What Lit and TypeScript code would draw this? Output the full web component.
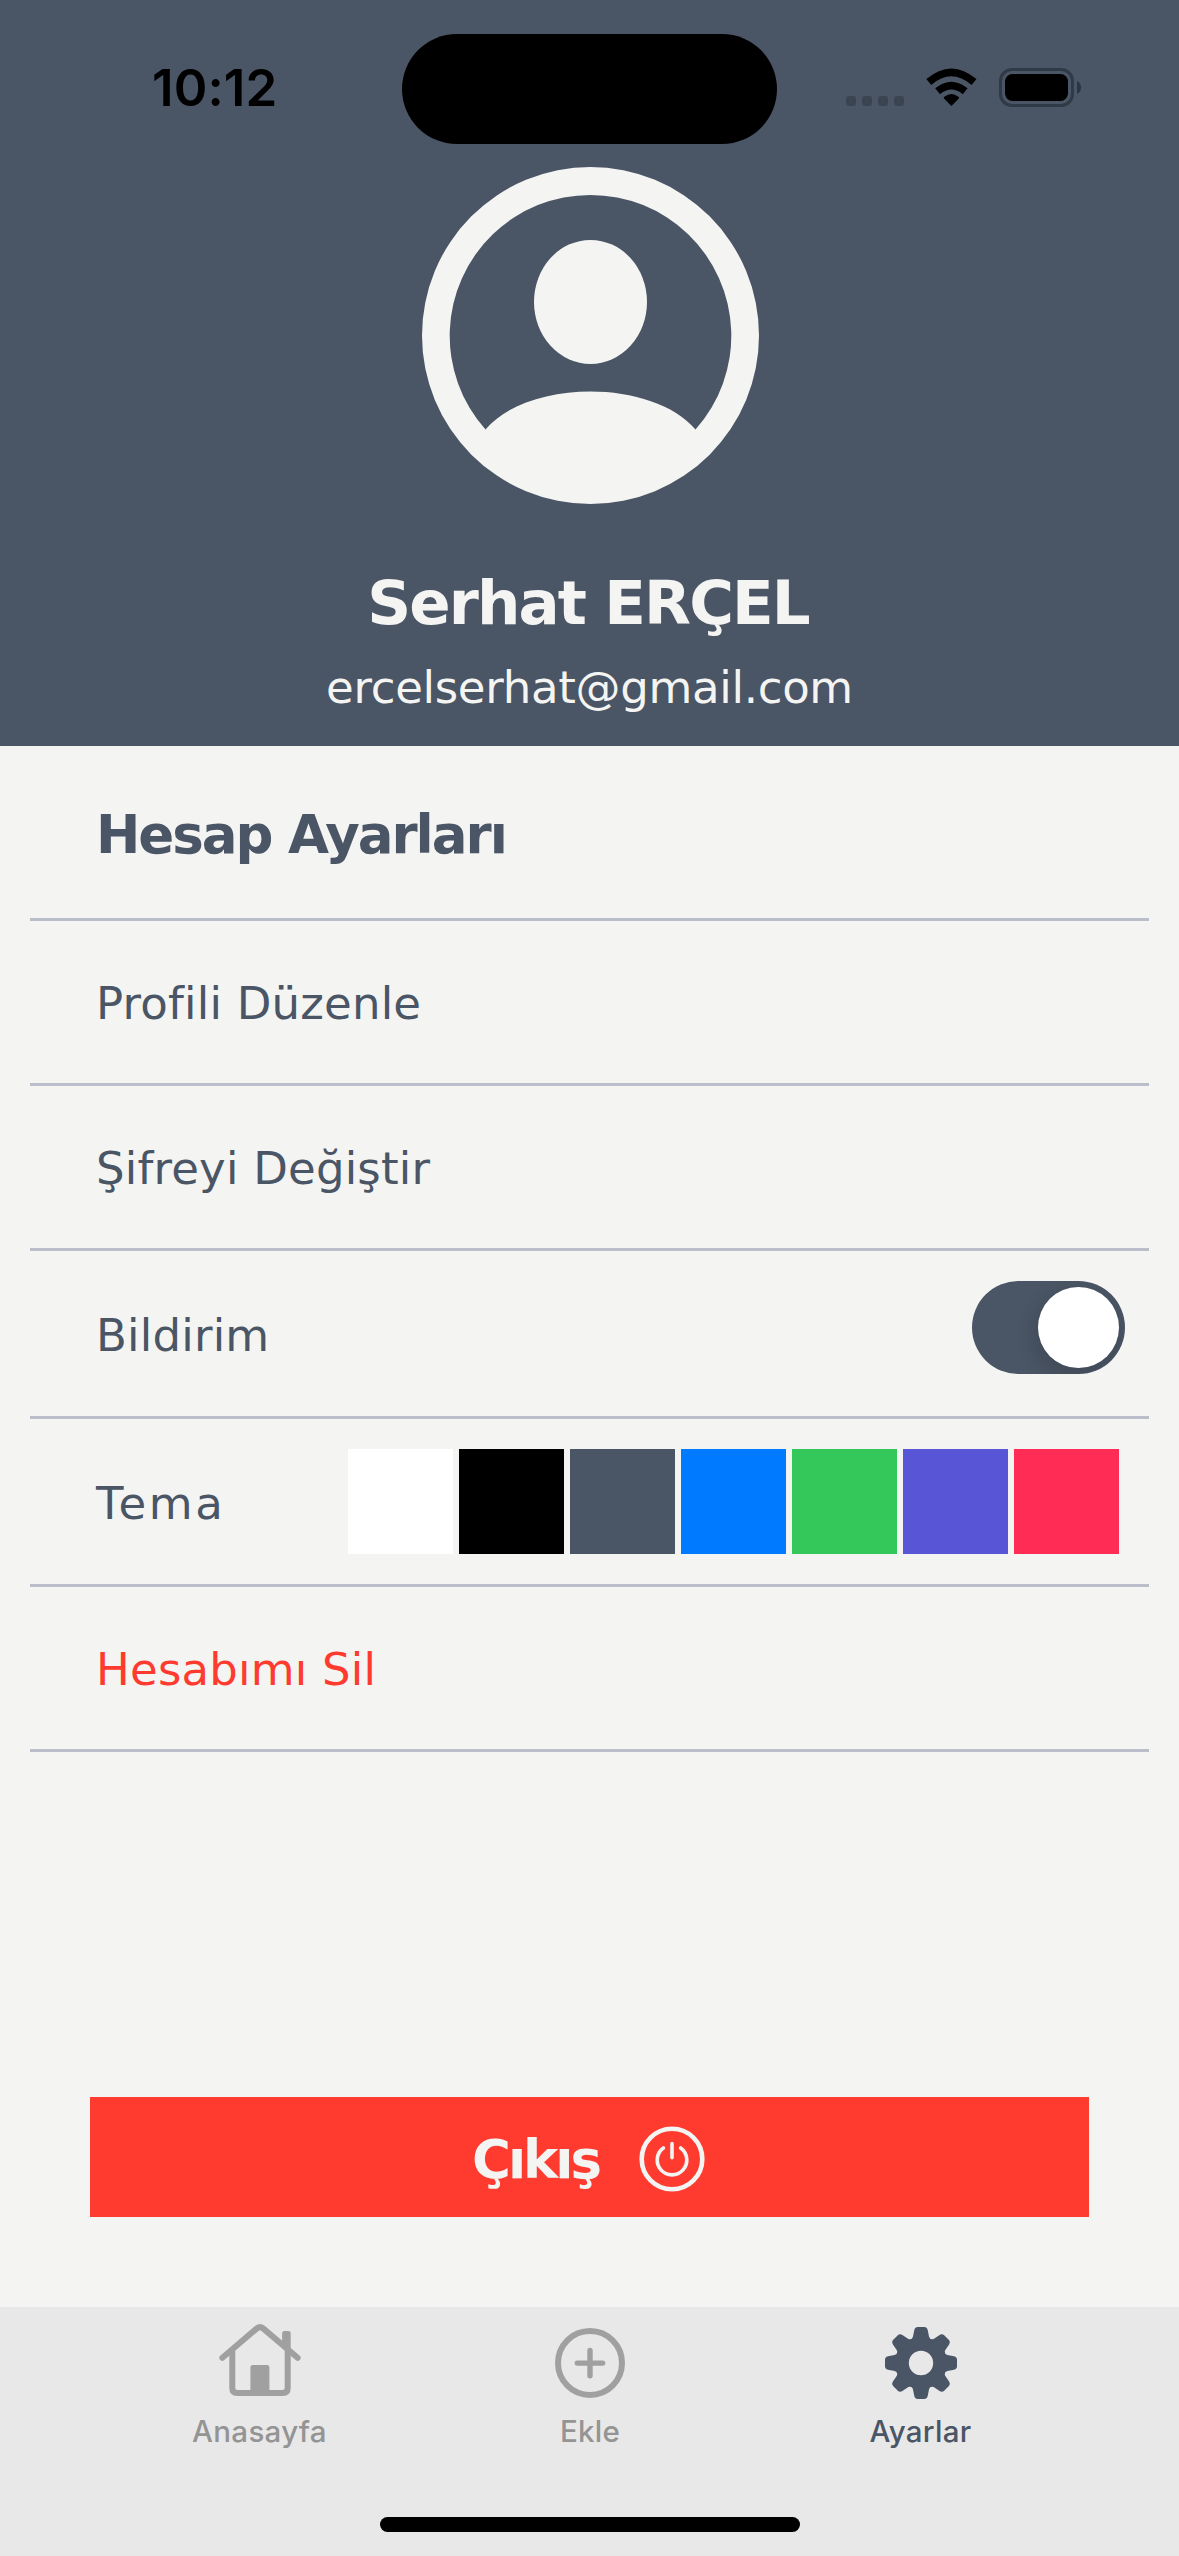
import { LitElement, html, css, svg } from "lit";
import { customElement, property } from "lit/decorators.js";

const THEMES = ["#ffffff", "#000000", "#4a5565", "#007aff", "#34c759", "#5856d6", "#ff2d55"];

@customElement("status-bar")
export class StatusBar extends LitElement {
  static styles = css`
    :host { display: block; height: 167px; }
    .bar { display: flex; align-items: flex-start; height: 100%; }
    .time {
      width: 402px; box-sizing: border-box; padding-left: 152px; padding-top: 57px;
      font: 600 51px/62px Inter, sans-serif; letter-spacing: 0.1px; color: #000;
    }
    .island { width: 375px; height: 110px; margin-top: 34px; border-radius: 55px; background: #000; }
    svg { display: block; margin-left: 67px; margin-top: 60px; }
  `;
  render() {
    return html`<div class="bar">
      <div class="time">10:12</div>
      <div class="island"></div>
      <svg width="250" height="56" viewBox="844 60 250 56">
        <g fill="#3b4552">
          <rect x="846" y="96" width="10" height="10" rx="3.4" />
          <rect x="862" y="96" width="10" height="10" rx="3.4" />
          <rect x="878" y="96" width="10" height="10" rx="3.4" />
          <rect x="894" y="96" width="10" height="10" rx="3.4" />
        </g>
        <path d="M951.4 106 L944 98.6 Q943.2 97.6 944.4 96.8 Q951.4 91.4 958.4 96.8 Q959.6 97.6 958.8 98.6 Z" />
        <g fill="none" stroke="#000" stroke-width="7.6">
          <path d="M937.6 91.2 Q951.4 80 965.2 91.2" />
          <path d="M928.8 82 Q951.4 62.8 974 82" />
        </g>
        <rect x="1000.5" y="69.5" width="72" height="36" rx="11.5" fill="none" stroke="#303a46" stroke-width="3" />
        <rect x="1005" y="74" width="63" height="27" rx="7.5" />
        <path d="M1077 81 Q1081 83 1081 87.5 Q1081 92 1077 94 Z" fill="#2b343f" />
      </svg>
    </div>`;
  }
}

@customElement("profile-card")
export class ProfileCard extends LitElement {
  @property() name = "";
  @property() email = "";
  static styles = css`
    :host { display: flex; flex-direction: column; align-items: center; height: 579px; color: #f4f4f2; }
    svg { display: block; margin-left: 2px; }
    .name {
      margin-top: 63px; padding-right: 3px; font: 700 61px/72px "DejaVu Sans", sans-serif; letter-spacing: -1.9px;
      white-space: nowrap;
    }
    .email { margin-top: 22px; font: 45px/54px "DejaVu Sans", sans-serif; letter-spacing: -0.3px; white-space: nowrap; }
  `;
  render() {
    return html`
      <svg width="337" height="337" viewBox="-168.5 -168.5 337 337" fill="#f4f4f2">
        <path
          fill-rule="evenodd"
          d="M0 -168.5 A168.5 168.5 0 1 1 0 168.5 A168.5 168.5 0 1 1 0 -168.5 Z
             M-105 94 C-84 69 -42 56 0 56 C42 56 84 69 105 94 A140.8 140.8 0 1 0 -105 94 Z"
        />
        <ellipse cx="0" cy="-33.6" rx="56.5" ry="62" />
      </svg>
      <div class="name">${this.name}</div>
      <div class="email">${this.email}</div>
    `;
  }
}

@customElement("settings-list")
export class SettingsList extends LitElement {
  static styles = css`
    :host { display: block; padding: 0 30px; color: #4a5565; }
    .row {
      display: flex; align-items: center; justify-content: space-between; box-sizing: border-box;
      height: 165px; padding: 0 24px 0 66px; border-bottom: 3px solid #babeca;
      font: 45px/54px "DejaVu Sans", sans-serif; letter-spacing: 0.2px; white-space: nowrap;
    }
    .row > span { padding-top: 4px; }
    .title { height: 175px; font-size: 53px; font-weight: 700; letter-spacing: -2px; }
    .title > span { padding-top: 5px; }
    .tall { height: 168px; }
    .wide { letter-spacing: 2.6px; }
    .danger { color: #ff3b30; }
    .toggle {
      box-sizing: border-box; width: 153px; height: 93px; margin-bottom: 12px; padding: 6px; border-radius: 47px;
      background: #4a5565; display: flex; justify-content: flex-end; overflow: hidden;
    }
    .knob { width: 81px; height: 81px; border-radius: 50%; background: #fff; box-shadow: -2px 8px 22px rgba(0, 0, 0, 0.16); }
    .swatches { display: flex; gap: 6px; margin-right: 6px; }
    .swatch { width: 105px; height: 105px; }
  `;
  render() {
    return html`
      <div class="row title"><span>Hesap Ayarları</span></div>
      <div class="row"><span>Profili Düzenle</span></div>
      <div class="row"><span>Şifreyi Değiştir</span></div>
      <div class="row tall">
        <span>Bildirim</span>
        <div class="toggle"><div class="knob"></div></div>
      </div>
      <div class="row tall">
        <span class="wide">Tema</span>
        <div class="swatches">
          ${THEMES.map((c) => html`<div class="swatch" style="background:${c}"></div>`)}
        </div>
      </div>
      <div class="row danger"><span>Hesabımı Sil</span></div>
    `;
  }
}

const toothAngles = [0, 45, 90, 135, 180, 225, 270, 315];

const ICONS = {
  home: svg`
    <g transform="translate(0.4 -3)">
      <g fill="none" stroke="currentColor" stroke-width="6" stroke-linecap="round" stroke-linejoin="round">
        <path d="M12 47.8 L46.5 18.4 Q49.6 15.8 52.7 18.4 L87.2 47.8" />
        <path d="M21.9 41 V78 Q21.9 83 26.9 83 H72.3 Q77.3 83 77.3 78 V41" />
      </g>
      <rect x="40" y="55" width="19" height="29" rx="2.4" fill="currentColor" />
      <path d="M71.7 36 V23.4 Q71.7 21 74.1 21 H77.9 Q80.3 21 80.3 23.4 V43 Z" fill="currentColor" />
    </g>`,
  add: svg`
    <g fill="none" stroke="currentColor" stroke-width="6" stroke-linecap="round">
      <circle cx="50" cy="50" r="32" />
      <path d="M50 37.4 V62.8 M37.3 50.1 H62.7" stroke-width="5.4" />
    </g>`,
  gear: svg`
    <g fill="currentColor">
      <path
        fill-rule="evenodd"
        d="M50 24 A26 26 0 1 1 50 76 A26 26 0 1 1 50 24 Z M50 37.8 A12.2 12.2 0 1 0 50 62.2 A12.2 12.2 0 1 0 50 37.8 Z"
      />
      ${toothAngles.map(
        (a) => svg`<path transform="rotate(${a} 50 50)"
          d="M39 27 Q41.6 26 42 23.6 L43.3 17 Q44 14 46.8 14 H53.2 Q56 14 56.7 17 L58 23.6 Q58.4 26 61 27 Z" />`
      )}
    </g>`,
};

@customElement("tab-item")
export class TabItem extends LitElement {
  @property() icon: keyof typeof ICONS = "home";
  @property() label = "";
  static styles = css`
    :host { display: flex; flex-direction: column; align-items: center; width: 330.5px; color: #a0a0a0; }
    :host([active]) { color: #4a5565; }
    svg { display: block; margin-top: 6px; }
    .label { font: 500 29.5px/36px Inter, sans-serif; letter-spacing: 0.3px; color: #949494; }
    :host([active]) .label { color: #4a5565; }
  `;
  render() {
    return html`
      <svg width="100" height="100" viewBox="0 0 100 100">${ICONS[this.icon]}</svg>
      <div class="label">${this.label}</div>
    `;
  }
}

@customElement("app-root")
export class AppRoot extends LitElement {
  static styles = css`
    :host { display: flex; flex-direction: column; width: 1179px; height: 2556px; background: #f4f4f2; overflow: hidden; }
    .head { height: 746px; background: #4a5565; }
    .body { flex: 1; display: flex; flex-direction: column; }
    .logout {
      box-sizing: border-box; margin: auto 90px 90px; padding-right: 2px; height: 120px; background: #ff3b30;
      color: #f4f4f2; display: flex; align-items: center; justify-content: center; gap: 40px;
      font: 700 53px/60px "DejaVu Sans", sans-serif; letter-spacing: -3px;
    }
    .logout span { padding-top: 5px; }
    .logout svg { display: block; margin-top: 3px; }
    .tabs {
      box-sizing: border-box; display: flex; justify-content: center; height: 249px; padding-left: 1px;
      background: #e8e8e8; position: relative;
    }
    .indicator {
      position: absolute; left: 380px; bottom: 24px; width: 420px; height: 15px; border-radius: 8px; background: #000;
    }
  `;
  render() {
    return html`
      <div class="head">
        <status-bar></status-bar>
        <profile-card name="Serhat ERÇEL" email="ercelserhat@gmail.com"></profile-card>
      </div>
      <div class="body">
        <settings-list></settings-list>
        <div class="logout">
          <span>Çıkış</span>
          <svg width="66" height="66" viewBox="-33 -33 66 66" fill="none" stroke="#f4f4f2" stroke-linecap="round">
            <circle r="30.3" stroke-width="4.6" />
            <path stroke-width="3.6" d="M-8.6 -11 A14.8 14.8 0 1 0 8.6 -11 M0 -15.4 V-1.2" />
          </svg>
        </div>
      </div>
      <div class="tabs">
        <tab-item icon="home" label="Anasayfa"></tab-item>
        <tab-item icon="add" label="Ekle"></tab-item>
        <tab-item icon="gear" label="Ayarlar" active></tab-item>
        <div class="indicator"></div>
      </div>
    `;
  }
}
